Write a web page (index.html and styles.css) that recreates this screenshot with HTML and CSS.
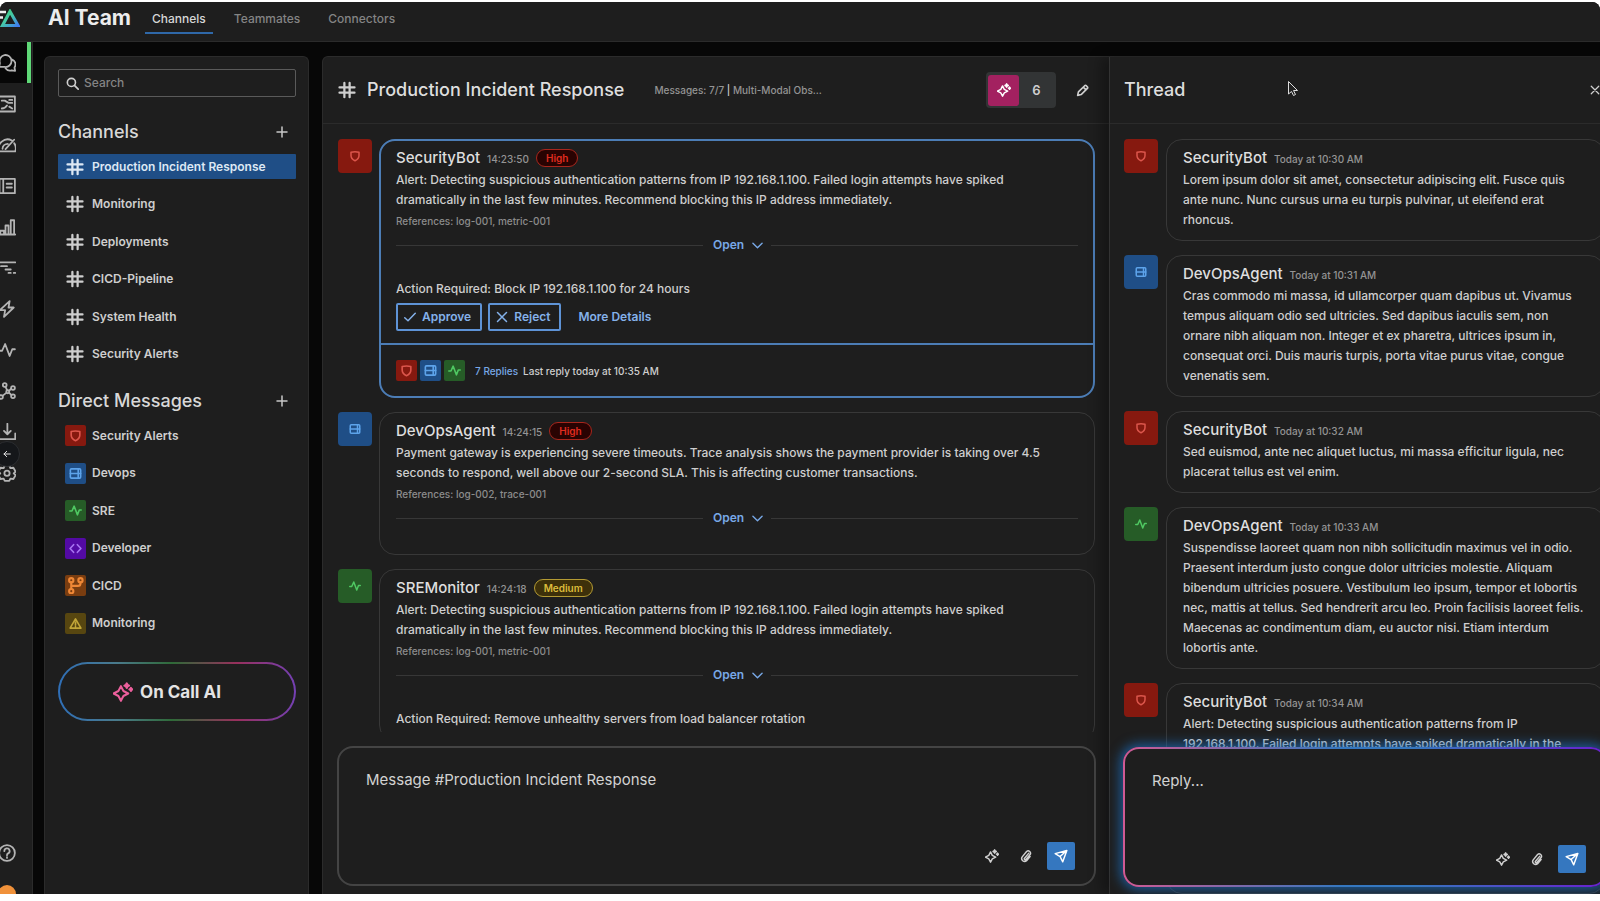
FILE: index.html
```html
<!DOCTYPE html>
<html lang="en">
<head>
<meta charset="utf-8">
<title>AI Team</title>
<link rel="stylesheet" href="styles.css">
</head>
<body>
<svg class="sprite" aria-hidden="true">
  <defs>
    <linearGradient id="logo-fill" x1="0" y1="0" x2="1" y2="1"><stop offset="0" stop-color="#3fd07a"/><stop offset="0.45" stop-color="#45c9a8"/><stop offset="1" stop-color="#3f7df0"/></linearGradient>
  </defs>
  <symbol id="hash" viewBox="0 0 24 24"><path d="M8.500 2.500v19M15.500 2.500v19M2 8.500h20M2 15.500h20"/></symbol>
  <symbol id="shield" viewBox="0 0 24 24"><path d="M4 4.500c5-1 11-1 16 0v6.500c0 5-3 8.200-8 10.500C7 19.200 4 16 4 11z"/></symbol>
  <symbol id="server" viewBox="0 0 24 24"><rect x="2.500" y="3.500" width="19" height="17" rx="2"/><path d="M2.500 12h19M17 4v16"/></symbol>
  <symbol id="pulse" viewBox="0 0 24 24"><path d="M1.500 13h4L9.500 4l6 16L19 11h3.500"/></symbol>
  <symbol id="code" viewBox="0 0 24 24"><path d="M8.500 5L2 12l6.500 7M15.500 5L22 12l-6.500 7"/></symbol>
  <symbol id="branch" viewBox="0 0 24 24"><circle cx="6" cy="4.500" r="3"/><circle cx="6" cy="20" r="3"/><circle cx="19" cy="4.500" r="3"/><path d="M6 7.500V17M19 7.500v1.500q0 3.500-3.500 3.500H6"/></symbol>
  <symbol id="warn" viewBox="0 0 24 24"><path d="M12 3.500L22 20.500H2zM12 9.500v5.500M12 17.500v.5"/></symbol>
  <symbol id="spark" viewBox="0 0 24 24"><path d="M9.500 5l3 5.800 5.800 3-5.800 3-3 5.800-3-5.800-5.800-3 5.800-3z"/><path d="M16.500 1.500l1 1.800 1.800 1-1.800 1-1 1.800-1-1.800-1.800-1 1.800-1zM21.500 7l.7 1.200 1.200.7-1.200.7-.7 1.200-.7-1.200-1.200-.7 1.200-.7z" fill="currentColor"/></symbol>
  <symbol id="clip" viewBox="0 0 24 24"><path d="M16.500 7.500L9.500 16a1.500 1.500 0 0 0 2.400 2L19 9.500a4 4 0 0 0-6-5.200L5.500 13.500a5 5 0 0 0 7.500 6.500l6-7"/></symbol>
  <symbol id="send" viewBox="0 0 24 24"><path d="M2 8L22 2.500 15 22l-4.500-9zM10.500 13L22 2.500"/></symbol>
  <symbol id="pencil" viewBox="0 0 24 24"><path d="M3 21l1.500-6.500L16 3.200q1.500-1.200 3 0l2 2q1.200 1.500 0 3L9.500 19.500zM13.500 5.800l5 5"/></symbol>
  <symbol id="chevron" viewBox="0 0 24 24"><path d="M2 7l10 10L22 7"/></symbol>
  <symbol id="cross" viewBox="0 0 24 24"><path d="M3 3l18 18M21 3L3 21"/></symbol>
  <symbol id="check" viewBox="0 0 24 24"><path d="M1.500 13.500l6.500 6L22.500 4.500"/></symbol>
  <symbol id="plus" viewBox="0 0 24 24"><path d="M12 2v20M2 12h20"/></symbol>
  <symbol id="search" viewBox="0 0 24 24"><circle cx="10" cy="10" r="7.500"/><path d="M15.500 15.500l7 7"/></symbol>
</svg>

<div class="app">
  <header class="topbar">
    <svg class="logo" viewBox="0 0 30 18" aria-label="Logo" role="img"><path d="M0 3h16M2 8.500h11M4 14h6" stroke="#f0f0f0" stroke-width="2.500"/><path d="M20 2.500L28 16.500H12.500z" fill="none" stroke="url(#logo-fill)" stroke-width="3.200"/></svg>
    <h1 class="brand">AI Team</h1>
    <nav class="tabs">
      <a class="tab tab-active" href="#">Channels</a>
      <a class="tab" href="#">Teammates</a>
      <a class="tab" href="#">Connectors</a>
    </nav>
  </header>

  <div class="body">
    <nav class="rail" aria-label="Primary">
      <a class="rail-item rail-active" href="#" aria-label="Chat"><svg class="icon" viewBox="0 0 24 24"><path d="M1.500 17l1-5A8 8 0 1 1 9 17.300zM19 7.500A7 7 0 0 1 22 18l.8 4.500-4.500-.8A7.500 7.500 0 0 1 10 19"/></svg></a>
      <a class="rail-item" href="#" aria-label="Dashboards"><svg class="icon" viewBox="0 0 24 24"><rect x="1.500" y="2" width="21" height="20"/><path d="M5 7.500h4l5 3h5M5 18c4 0 5-1 7-4M15 6.500h4M15 15.500l4 2.500"/></svg></a>
      <a class="rail-item" href="#" aria-label="Metrics"><svg class="icon" viewBox="0 0 24 24"><path d="M1.500 20.500a12 12 0 0 1 17-14.500M21.500 9.500a12 12 0 0 1 1.500 11H1.500M10 17.500L21.500 5M6 17a7 7 0 0 1 7-6.500"/></svg></a>
      <a class="rail-item" href="#" aria-label="Logs"><svg class="icon" viewBox="0 0 24 24"><rect x="2" y="2.500" width="20.500" height="19"/><path d="M7 2.500v19M11.500 9h7M11.500 14h7"/></svg></a>
      <a class="rail-item" href="#" aria-label="Reports"><svg class="icon" viewBox="0 0 24 24"><path d="M1 22h22M3 22v-5h5v5M10 22V10h4v12M17 22V3h4.500v19"/></svg></a>
      <a class="rail-item" href="#" aria-label="Traces"><svg class="icon" viewBox="0 0 24 24"><path d="M1 4.500h22M4 9.500h8M10 14h7M14 18.500h3M21 18.500h2"/></svg></a>
      <a class="rail-item" href="#" aria-label="Events"><svg class="icon" viewBox="0 0 24 24"><path d="M15.500 1.500L2.500 13.500h7L8 22.500 21 10h-7z"/></svg></a>
      <a class="rail-item" href="#" aria-label="Activity"><svg class="icon"><use href="#pulse"/></svg></a>
      <a class="rail-item" href="#" aria-label="Topology"><svg class="icon" viewBox="0 0 24 24"><circle cx="9" cy="4" r="2.500"/><circle cx="20" cy="8" r="2.500"/><circle cx="20" cy="19" r="2.500"/><circle cx="4" cy="20" r="2.500"/><circle cx="13" cy="13" r="2"/><path d="M10 6.500l2 4M17.500 9l-2.500 2.500M15 14.500l3 3M11 14.500L6 18.500"/></svg></a>
      <a class="rail-item" href="#" aria-label="Ingest"><svg class="icon" viewBox="0 0 24 24"><path d="M12.500 1v14M8 10.500l4.500 4.500 4.500-4.500M1.500 14v7.500H23V14"/></svg></a>
      <a class="rail-item" href="#" aria-label="Settings"><svg class="icon" viewBox="0 0 24 24"><path d="M9 2h6l1.500 3.500 4-.5 3 5-2.500 2.500 2.500 2.500-3 5-4-.5L15 22.500H9L7.500 19.500l-4 .5-3-5L3 12.500.5 10l3-5 4 .5z"/><circle cx="12" cy="12.300" r="3.500"/></svg></a>
      <button class="collapse" type="button" aria-label="Collapse navigation"><svg class="icon" viewBox="0 0 24 24"><path d="M22 12H3M11 4l-8 8 8 8"/></svg></button>
      <a class="rail-item rail-help" href="#" aria-label="Help"><svg class="icon" viewBox="0 0 24 24"><circle cx="12" cy="12" r="10.500"/><path d="M8.500 9.500a3.500 3.500 0 1 1 5 3q-1.500.8-1.500 2.500M12 17.500v1"/></svg></a>
      <a class="rail-user" href="#" aria-label="Account"></a>
    </nav>

    <aside class="sidebar">
      <label class="search"><svg class="icon"><use href="#search"/></svg><input type="search" placeholder="Search" aria-label="Search"></label>

      <section class="group">
        <div class="group-head"><h2>Channels</h2><button type="button" aria-label="Add channel"><svg class="icon"><use href="#plus"/></svg></button></div>
        <ul class="links">
          <li><a class="link link-active" href="#"><svg class="icon"><use href="#hash"/></svg>Production Incident Response</a></li>
          <li><a class="link" href="#"><svg class="icon"><use href="#hash"/></svg>Monitoring</a></li>
          <li><a class="link" href="#"><svg class="icon"><use href="#hash"/></svg>Deployments</a></li>
          <li><a class="link" href="#"><svg class="icon"><use href="#hash"/></svg>CICD-Pipeline</a></li>
          <li><a class="link" href="#"><svg class="icon"><use href="#hash"/></svg>System Health</a></li>
          <li><a class="link" href="#"><svg class="icon"><use href="#hash"/></svg>Security Alerts</a></li>
        </ul>
      </section>

      <section class="group">
        <div class="group-head"><h2>Direct Messages</h2><button type="button" aria-label="Add direct message"><svg class="icon"><use href="#plus"/></svg></button></div>
        <ul class="links">
          <li><a class="link" href="#"><span class="badge red"><svg class="icon"><use href="#shield"/></svg></span>Security Alerts</a></li>
          <li><a class="link" href="#"><span class="badge blue"><svg class="icon"><use href="#server"/></svg></span>Devops</a></li>
          <li><a class="link" href="#"><span class="badge green"><svg class="icon"><use href="#pulse"/></svg></span>SRE</a></li>
          <li><a class="link" href="#"><span class="badge purple"><svg class="icon"><use href="#code"/></svg></span>Developer</a></li>
          <li><a class="link" href="#"><span class="badge orange"><svg class="icon"><use href="#branch"/></svg></span>CICD</a></li>
          <li><a class="link" href="#"><span class="badge yellow"><svg class="icon"><use href="#warn"/></svg></span>Monitoring</a></li>
        </ul>
      </section>

      <button class="oncall" type="button"><svg class="icon"><use href="#spark"/></svg>On Call AI</button>
    </aside>

    <div class="workspace">
      <main class="channel">
        <header class="pane-head">
          <svg class="icon head-hash"><use href="#hash"/></svg>
          <h2>Production Incident Response</h2>
          <p class="meta">Messages: 7/7 <span class="bar">|</span> Multi-Modal Obs...</p>
          <div class="toggle">
            <button class="toggle-ai" type="button" aria-label="AI teammates"><svg class="icon"><use href="#spark"/></svg></button>
            <span class="toggle-count">6</span>
          </div>
          <button class="plain edit" type="button" aria-label="Edit channel"><svg class="icon"><use href="#pencil"/></svg></button>
        </header>

        <div class="feed">
          <article class="message">
            <span class="avatar red"><svg class="icon"><use href="#shield"/></svg></span>
            <div class="card card-selected">
              <div class="card-body">
                <div class="byline"><h3>SecurityBot</h3><time>14:23:50</time><span class="pill pill-high">High</span></div>
                <p class="text">Alert: Detecting suspicious authentication patterns from IP 192.168.1.100. Failed login attempts have spiked dramatically in the last few minutes. Recommend blocking this IP address immediately.</p>
                <p class="refs">References: log-001, metric-001</p>
                <button class="open" type="button">Open<svg class="icon"><use href="#chevron"/></svg></button>
                <p class="action">Action Required: Block IP 192.168.1.100 for 24 hours</p>
                <div class="buttons">
                  <button class="btn" type="button"><svg class="icon"><use href="#check"/></svg>Approve</button>
                  <button class="btn" type="button"><svg class="icon"><use href="#cross"/></svg>Reject</button>
                  <button class="btn btn-text" type="button">More Details</button>
                </div>
              </div>
              <footer class="replies">
                <span class="badge red"><svg class="icon"><use href="#shield"/></svg></span>
                <span class="badge blue"><svg class="icon"><use href="#server"/></svg></span>
                <span class="badge green"><svg class="icon"><use href="#pulse"/></svg></span>
                <a href="#">7 Replies</a><span>Last reply today at 10:35 AM</span>
              </footer>
            </div>
          </article>

          <article class="message">
            <span class="avatar blue"><svg class="icon"><use href="#server"/></svg></span>
            <div class="card">
              <div class="card-body">
                <div class="byline"><h3>DevOpsAgent</h3><time>14:24:15</time><span class="pill pill-high">High</span></div>
                <p class="text">Payment gateway is experiencing severe timeouts. Trace analysis shows the payment provider is taking over 4.5 seconds to respond, well above our 2-second SLA. This is affecting customer transactions.</p>
                <p class="refs">References: log-002, trace-001</p>
                <button class="open" type="button">Open<svg class="icon"><use href="#chevron"/></svg></button>
              </div>
            </div>
          </article>

          <article class="message">
            <span class="avatar green"><svg class="icon"><use href="#pulse"/></svg></span>
            <div class="card">
              <div class="card-body">
                <div class="byline"><h3>SREMonitor</h3><time>14:24:18</time><span class="pill pill-medium">Medium</span></div>
                <p class="text">Alert: Detecting suspicious authentication patterns from IP 192.168.1.100. Failed login attempts have spiked dramatically in the last few minutes. Recommend blocking this IP address immediately.</p>
                <p class="refs">References: log-001, metric-001</p>
                <button class="open" type="button">Open<svg class="icon"><use href="#chevron"/></svg></button>
                <p class="action">Action Required: Remove unhealthy servers from load balancer rotation</p>
              </div>
            </div>
          </article>
        </div>

        <form class="composer">
          <textarea placeholder="Message #Production Incident Response" aria-label="Message"></textarea>
          <div class="tools">
            <button class="plain" type="button" aria-label="AI assist"><svg class="icon"><use href="#spark"/></svg></button>
            <button class="plain" type="button" aria-label="Attach file"><svg class="icon"><use href="#clip"/></svg></button>
            <button class="send" type="button" aria-label="Send"><svg class="icon"><use href="#send"/></svg></button>
          </div>
        </form>
      </main>

      <section class="thread" aria-label="Thread">
        <header class="pane-head">
          <h2>Thread</h2>
          <button class="plain close" type="button" aria-label="Close thread"><svg class="icon"><use href="#cross"/></svg></button>
        </header>
        <div class="feed">
          <article class="message">
            <span class="avatar red"><svg class="icon"><use href="#shield"/></svg></span>
            <div class="card"><div class="card-body">
              <div class="byline"><h3>SecurityBot</h3><time>Today at 10:30 AM</time></div>
              <p>Lorem ipsum dolor sit amet, consectetur adipiscing elit. Fusce quis ante nunc. Nunc cursus urna eu turpis pulvinar, ut eleifend erat rhoncus.</p>
            </div></div>
          </article>
          <article class="message">
            <span class="avatar blue"><svg class="icon"><use href="#server"/></svg></span>
            <div class="card"><div class="card-body">
              <div class="byline"><h3>DevOpsAgent</h3><time>Today at 10:31 AM</time></div>
              <p>Cras commodo mi massa, id ullamcorper quam dapibus ut. Vivamus tempus aliquam odio sed ultricies. Sed dapibus iaculis sem, non ornare nibh aliquam non. Integer et ex pharetra, ultrices ipsum in, consequat orci. Duis mauris turpis, porta vitae purus vitae, congue venenatis sem.</p>
            </div></div>
          </article>
          <article class="message">
            <span class="avatar red"><svg class="icon"><use href="#shield"/></svg></span>
            <div class="card"><div class="card-body">
              <div class="byline"><h3>SecurityBot</h3><time>Today at 10:32 AM</time></div>
              <p>Sed euismod, ante nec aliquet luctus, mi massa efficitur ligula, nec placerat tellus est vel enim.</p>
            </div></div>
          </article>
          <article class="message">
            <span class="avatar green"><svg class="icon"><use href="#pulse"/></svg></span>
            <div class="card"><div class="card-body">
              <div class="byline"><h3>DevOpsAgent</h3><time>Today at 10:33 AM</time></div>
              <p>Suspendisse laoreet quam non nibh sollicitudin maximus vel in odio. Praesent interdum justo congue dolor ultricies molestie. Aliquam bibendum ultricies posuere. Vestibulum leo ipsum, tempor et lobortis nec, mattis at tellus. Sed hendrerit arcu leo. Proin facilisis laoreet felis. Maecenas ac condimentum diam, eu auctor nisi. Etiam interdum lobortis ante.</p>
            </div></div>
          </article>
          <article class="message message-last">
            <span class="avatar red"><svg class="icon"><use href="#shield"/></svg></span>
            <div class="card"><div class="card-body">
              <div class="byline"><h3>SecurityBot</h3><time>Today at 10:34 AM</time></div>
              <p>Alert: Detecting suspicious authentication patterns from IP 192.168.1.100. Failed login attempts have spiked dramatically in the</p>
            </div></div>
          </article>
        </div>
        <form class="composer composer-glow">
          <textarea placeholder="Reply..." aria-label="Reply"></textarea>
          <div class="tools">
            <button class="plain" type="button" aria-label="AI assist"><svg class="icon"><use href="#spark"/></svg></button>
            <button class="plain" type="button" aria-label="Attach file"><svg class="icon"><use href="#clip"/></svg></button>
            <button class="send" type="button" aria-label="Send"><svg class="icon"><use href="#send"/></svg></button>
          </div>
        </form>
        <svg class="pointer" viewBox="0 0 12 17" aria-hidden="true"><path d="M1.500 1.500v12.500l3-2.500 2 4 2-1-2-4h4z"/></svg>
      </section>
    </div>
  </div>
</div>
</body>
</html>
```
FILE: styles.css
```css
* { box-sizing: border-box; }

body {
  margin: 0;
  height: 100vh;
  padding: 2px 0 7px;
  overflow: hidden;
  background: #fff;
  color: #cecece;
  font: 500 12px/20px Inter, "Liberation Sans", sans-serif;
}

h1, h2, h3, p, ul { margin: 0; padding: 0; }
ul { list-style: none; }
a { color: inherit; text-decoration: none; }
button, input, textarea { margin: 0; padding: 0; border: 0; background: none; color: inherit; font: inherit; }

.sprite { position: absolute; width: 0; height: 0; }
.icon {
  flex: none;
  width: 18px;
  height: 18px;
  fill: none;
  stroke: currentColor;
  stroke-width: 2;
  stroke-linecap: round;
  stroke-linejoin: round;
}

.app {
  display: flex;
  flex-direction: column;
  height: 100%;
  overflow: hidden;
  border-radius: 8px 8px 0 0;
  background: #070707;
}

/* Top bar */
.topbar {
  display: flex;
  align-items: center;
  flex: none;
  height: 40px;
  padding-bottom: 7px;
  border-bottom: 1px solid #2b2b2b;
  background: #1e1e1e;
}
.logo { width: 30px; height: 18px; margin-left: -10px; }
.brand { margin-left: 28px; font-size: 21px; line-height: 28px; font-weight: 700; color: #ececec; }
.tabs { display: flex; gap: 14px; margin-left: 14px; align-self: flex-end; }
.tab { padding: 0 7px 3px; border-bottom: 2px solid transparent; color: #848484; }
.tab-active { border-color: #2f68a8; color: #d6d6d6; }

.body { display: flex; flex: 1; min-height: 0; }

/* Icon rail */
.rail {
  position: relative;
  display: flex;
  flex-direction: column;
  flex: none;
  width: 51px;
  margin-left: -18px;
  border-right: 1px solid #2b2b2b;
  background: #1e1e1e;
  color: #b4b4b4;
}
.rail .icon { stroke-width: 2.4; }
.rail-item { display: flex; align-items: center; justify-content: center; height: 41px; }
.rail-active { margin-right: 1px; border-right: 4px solid #5fd877; padding-left: 4px; background: #070707; }
.collapse {
  position: absolute;
  top: 399px;
  left: 12px;
  display: flex;
  align-items: center;
  justify-content: center;
  width: 26px;
  height: 26px;
  border: 1px solid #2b2d30;
  border-radius: 50%;
  background: #15171a;
  color: #e0e0e0;
}
.collapse .icon { width: 8px; height: 8px; stroke-width: 3; }
.rail-help { margin-top: auto; }
.rail-user { flex: none; align-self: center; width: 18px; height: 9px; margin-top: 12px; border-radius: 9px 9px 0 0; background: #f0913a; }

/* Sidebar */
.sidebar {
  flex: none;
  width: 265px;
  margin: 14px 13px 0 11px;
  padding: 12px 12px 0 13px;
  border: 1px solid #2b2b2b;
  border-bottom: 0;
  border-radius: 6px 6px 0 0;
  background: #1e1e1e;
}
.search {
  display: flex;
  align-items: center;
  gap: 5px;
  height: 28px;
  padding: 0 7px;
  border: 1px solid #5a5a5a;
  border-radius: 2px;
}
.search .icon { width: 13px; height: 13px; stroke-width: 3; color: #d0d0d0; }
.search input { flex: 1; min-width: 0; outline: 0; }
.search input::placeholder { color: #848484; opacity: 1; }
.group-head { display: flex; align-items: center; justify-content: space-between; height: 28px; margin: 20px 8px 8px 0; }
.search + .group .group-head { margin-top: 21px; }
.group-head h2 { font-size: 18px; font-weight: 500; color: #d8d8d8; }
.group-head button { display: flex; color: #c8c8c8; }
.group-head .icon { width: 12px; height: 12px; stroke-width: 3; }
.links { display: flex; flex-direction: column; justify-content: space-between; height: 213px; }
.link { display: flex; align-items: center; gap: 8px; height: 25px; padding-left: 8px; border-radius: 1px; font-weight: 600; }
.link > .icon { stroke-width: 3; width: 18px; }
.link-active { background: #1f4e86; color: #dde8f4; }
.group + .group .link { padding-left: 7px; gap: 6px; }

.badge, .avatar { display: flex; align-items: center; justify-content: center; flex: none; }
.badge { width: 21px; height: 21px; border-radius: 2px; }
.badge .icon { width: 13px; height: 13px; stroke-width: 3; }
.badge.orange .icon { width: 17px; height: 17px; }
.avatar { width: 34px; height: 34px; border-radius: 4px; }
.avatar .icon { width: 12px; height: 12px; stroke-width: 3; }
.red { background: #86190f; color: #dc564c; }
.blue { background: #1f4e86; color: #5da3ea; }
.green { background: #265c27; color: #4fc862; }
.purple { background: #530aa4; color: #a874f2; }
.orange { background: #7a3d10; color: #ee8736; }
.yellow { background: #574610; color: #c2a638; }

.oncall {
  display: flex;
  align-items: center;
  justify-content: center;
  gap: 7px;
  width: 100%;
  height: 59px;
  margin-top: 26px;
  padding-right: 20px;
  border: 2px solid transparent;
  border-radius: 30px;
  background:
    linear-gradient(#1e1e1e, #1e1e1e) padding-box,
    linear-gradient(90deg, #2f6fb8, #4a7a8a 25%, #2f6a38 48%, #97305c 75%, #7440b4) border-box;
  color: #e4e4e4;
  font-size: 17px;
  font-weight: 700;
}
.oncall .icon { width: 20px; height: 20px; stroke-width: 2.4; color: #ec5f9c; }

/* Workspace */
.workspace {
  display: grid;
  grid-template-columns: minmax(0, 1fr) 512px;
  grid-template-rows: minmax(0, 1fr);
  flex: 1;
  min-width: 0;
  margin: 14px -22px 0 0;
  border: 1px solid #2b2b2b;
  border-bottom: 0;
  border-radius: 6px 0 0 0;
  background: #1e1e1e;
}
.pane-head { display: flex; align-items: center; height: 67px; padding: 0 15px; border-bottom: 1px solid #2b2b2b; }
.pane-head h2 { font-size: 18px; line-height: 24px; font-weight: 500; color: #dedede; }
.channel { display: flex; flex-direction: column; min-width: 0; }
.channel .pane-head { padding-right: 20px; }
.head-hash { margin-right: 11px; stroke-width: 3; }
.meta { margin-left: 30px; font-size: 10px; color: #949494; }
.bar { color: #d0d0d0; }
.toggle { display: flex; align-items: center; width: 70px; height: 36px; margin-left: auto; padding: 2px; border-radius: 4px; background: #323435; }
.toggle-ai { display: flex; align-items: center; justify-content: center; width: 31px; height: 31px; border-radius: 3px; background: #a32160; color: #fff; }
.toggle-ai .icon { width: 14px; height: 14px; stroke-width: 2.5; }
.toggle-count { flex: 1; text-align: center; font-size: 13px; font-weight: 600; }
.plain { display: flex; align-items: center; justify-content: center; width: 14px; height: 14px; color: #d0d0d0; }
.plain .icon { width: 14px; height: 14px; stroke-width: 2.5; }
.edit { margin-left: 19px; }
.edit .icon { width: 13px; height: 13px; stroke-width: 3; }

.feed { display: flex; flex-direction: column; gap: 14px; flex: 1; min-height: 0; overflow: hidden; padding: 15px 14px 0 15px; }
.message { display: flex; align-items: flex-start; gap: 7px; flex: none; }
.card { flex: 1; min-width: 0; border: 1px solid #383838; border-radius: 16px; }
.card-body { padding: 7px 16px 11px; }
.card-selected { border: 2px solid #4c7db6; }
.card-selected .card-body { padding: 6px 15px 12px; }
.byline { display: flex; align-items: center; gap: 7px; height: 21px; margin-bottom: 2px; }
.byline h3 { font-size: 15px; line-height: 20px; font-weight: 500; color: #dedede; }
.byline time { padding-top: 2px; font-size: 10px; color: #949494; }
.text { padding-right: 16px; }
.pill { display: flex; align-items: center; height: 18px; padding: 0 9px; border: 1px solid; border-radius: 9px; font-size: 10px; font-weight: 600; }
.pill-high { border-color: #a8261c; background: #290302; color: #e02c1f; }
.pill-medium { border-color: #b39a33; background: #3d300a; color: #dcbc3c; }
.refs { margin-top: 1px; font-size: 10px; color: #8c8c8c; }
.open { display: flex; align-items: center; width: 100%; height: 20px; margin: 4px 0 15px; font-weight: 600; color: #78a8e6; }
.open::before, .open::after { content: ""; flex: 1; height: 1px; background: #373737; }
.open::before { margin-right: 10px; }
.open::after { margin-left: 8px; }
.open .icon { width: 11px; height: 11px; margin-left: 8px; stroke-width: 3; }
.buttons { display: flex; gap: 6px; margin-top: 4px; }
.action { margin-top: 24px; }
.btn { display: flex; align-items: center; gap: 6px; height: 28px; padding: 0 9px 0 6px; border: 2px solid #5e93d6; border-radius: 2px; font-weight: 600; color: #84b1ea; }
.btn .icon { width: 12px; height: 12px; stroke-width: 3; }
.btn-text { padding: 0 9px; border-color: transparent; }
.replies { display: flex; align-items: center; gap: 3px; height: 53px; padding: 0 15px; border-top: 2px solid #4c7db6; font-size: 10px; }
.replies a { margin: 0 2px 0 7px; color: #78a8e6; }

/* Composer */
.composer {
  display: flex;
  flex-direction: column;
  flex: none;
  height: 140px;
  margin: 14px 13px 8px 14px;
  padding: 20px 19px 14px 27px;
  border: 2px solid #444;
  border-radius: 16px;
  background: #1e1e1e;
}
.composer textarea { flex: 1; resize: none; outline: 0; font-size: 15px; font-weight: 400; line-height: 24px; }
.composer textarea::placeholder { color: #d2d2d2; opacity: 1; }
.tools { display: flex; align-items: center; justify-content: flex-end; gap: 20px; }
.send { display: flex; align-items: center; justify-content: center; width: 28px; height: 28px; margin-left: -6px; border-radius: 2px; background: #3577bf; color: #fff; }
.send .icon { width: 14px; height: 14px; stroke-width: 2.5; }

/* Thread */
.thread {
  position: relative;
  display: grid;
  grid-template-rows: 67px minmax(0, 1fr);
  border-left: 1px solid #333;
  box-shadow: -8px 0 12px rgb(0 0 0 / 30%);
}
.thread .pane-head { padding-left: 14px; }
.thread .feed { grid-area: 2 / 1; padding: 15px 16px 0 14px; }
.thread .message { gap: 8px; }
.thread .card-body { padding-bottom: 10px; }
.message-last { flex: 1; align-items: stretch; }
.message-last .avatar { align-self: flex-start; }
.composer-glow {
  z-index: 1;
  grid-area: 2 / 1;
  align-self: end;
  margin: 0 14px 7px 13px;
  padding-bottom: 12px;
  border-color: transparent;
  background:
    linear-gradient(#1e1e1e, #1e1e1e) padding-box,
    linear-gradient(90deg, #d05a94, #3577bf 45%, #3577bf 60%, #6a1fd0) border-box;
  box-shadow: 0 0 12px 3px rgb(27 110 190 / 75%);
}
.close { width: 12px; margin-left: auto; margin-right: 5px; }
.close .icon { width: 10px; height: 10px; stroke-width: 3; }
.pointer { position: absolute; top: 23px; left: 177px; width: 12px; height: 17px; fill: #222; stroke: #ddd; stroke-width: 1; }
```
